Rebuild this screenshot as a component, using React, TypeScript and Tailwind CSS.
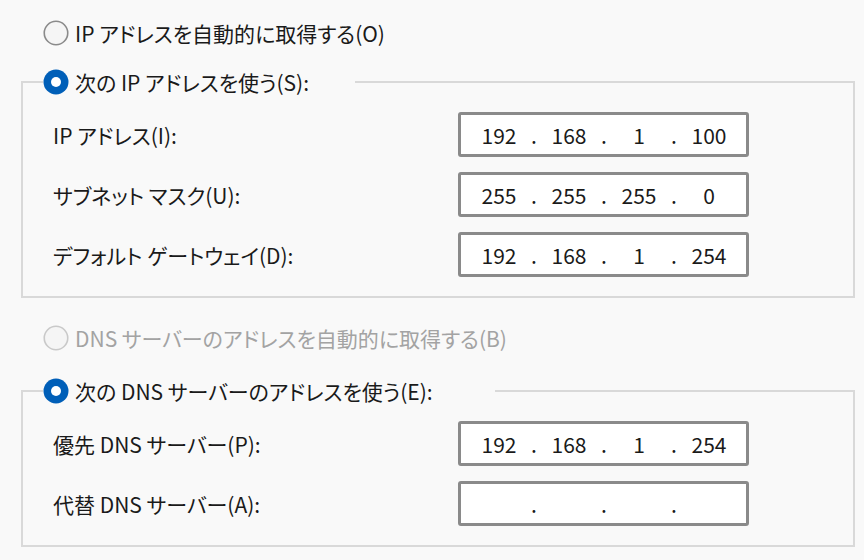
import React from "react";

const font = "font-['Noto_Sans_CJK_JP','Noto_Sans',sans-serif] [font-feature-settings:'palt']";

function Radio({ checked, disabled }: { checked?: boolean; disabled?: boolean }) {
  if (checked) {
    return (
      <svg width="26" height="26" viewBox="0 0 26 26" className="shrink-0">
        <circle cx="13" cy="13" r="12.5" fill="#005fb8" />
        <circle cx="13" cy="13" r="5" fill="#ffffff" />
      </svg>
    );
  }
  return (
    <svg width="26" height="26" viewBox="0 0 26 26" className="shrink-0">
      <circle
        cx="13"
        cy="13"
        r="11.75"
        fill="#f5f5f5"
        stroke={disabled ? "#c9c9c9" : "#8a8a8a"}
        strokeWidth="1.6"
      />
    </svg>
  );
}

function RadioRow({
  label,
  checked,
  disabled,
}: {
  label: string;
  checked?: boolean;
  disabled?: boolean;
}) {
  return (
    <div className="flex h-[28px] items-center gap-[6px]">
      <Radio checked={checked} disabled={disabled} />
      <span className={disabled ? "text-[#a3a3a3]" : "text-[#1a1a1a]"}>{label}</span>
    </div>
  );
}

function IpBox({ parts }: { parts: string[] }) {
  return (
    <div className="flex h-[45px] w-[291px] items-center rounded-[3px] border-[3px] border-[#8a8a8a] bg-white pl-[8px]">
      {parts.map((p, i) => (
        <React.Fragment key={i}>
          <span className="w-[60px] text-center text-[#1a1a1a]">{p}</span>
          {i < 3 && <span className="w-[10px] text-center text-[#1a1a1a]">.</span>}
        </React.Fragment>
      ))}
    </div>
  );
}

function Row({ label, parts }: { label: string; parts: string[] }) {
  return (
    <div className="grid grid-cols-[405px_291px] items-center">
      <span className="text-[#1a1a1a]">{label}</span>
      <IpBox parts={parts} />
    </div>
  );
}

function Group({
  legend,
  legendWidth,
  children,
}: {
  legend: React.ReactNode;
  legendWidth: string;
  children: React.ReactNode;
}) {
  return (
    <fieldset className="ml-[21px] w-[834px] border-2 border-[#d9d9d9] pl-[20px] pb-[19px]">
      <legend className={legendWidth}>{legend}</legend>
      <div className="ml-[10px] flex flex-col gap-[15px] pt-[16px]">{children}</div>
    </fieldset>
  );
}

export default function App() {
  return (
    <div className={`h-[560px] w-[864px] overflow-hidden bg-[#f9f9f9] text-[21px] leading-[28px] ${font}`}>
      <div className="pl-[43px] pt-[19px]">
        <RadioRow label="IP アドレスを自動的に取得する(O)" />
      </div>
      <div className="pt-[21px]">
        <Group
          legendWidth="w-[312px]"
          legend={<RadioRow label="次の IP アドレスを使う(S):" checked />}
        >
          <Row label="IP アドレス(I):" parts={["192", "168", "1", "100"]} />
          <Row label="サブネット マスク(U):" parts={["255", "255", "255", "0"]} />
          <Row label="デフォルト ゲートウェイ(D):" parts={["192", "168", "1", "254"]} />
        </Group>
      </div>
      <div className="pl-[43px] pt-[26px]">
        <RadioRow label="DNS サーバーのアドレスを自動的に取得する(B)" disabled />
      </div>
      <div className="pt-[25px]">
        <Group
          legendWidth="w-[452px]"
          legend={<RadioRow label="次の DNS サーバーのアドレスを使う(E):" checked />}
        >
          <Row label="優先 DNS サーバー(P):" parts={["192", "168", "1", "254"]} />
          <Row label="代替 DNS サーバー(A):" parts={["", "", "", ""]} />
        </Group>
      </div>
    </div>
  );
}
